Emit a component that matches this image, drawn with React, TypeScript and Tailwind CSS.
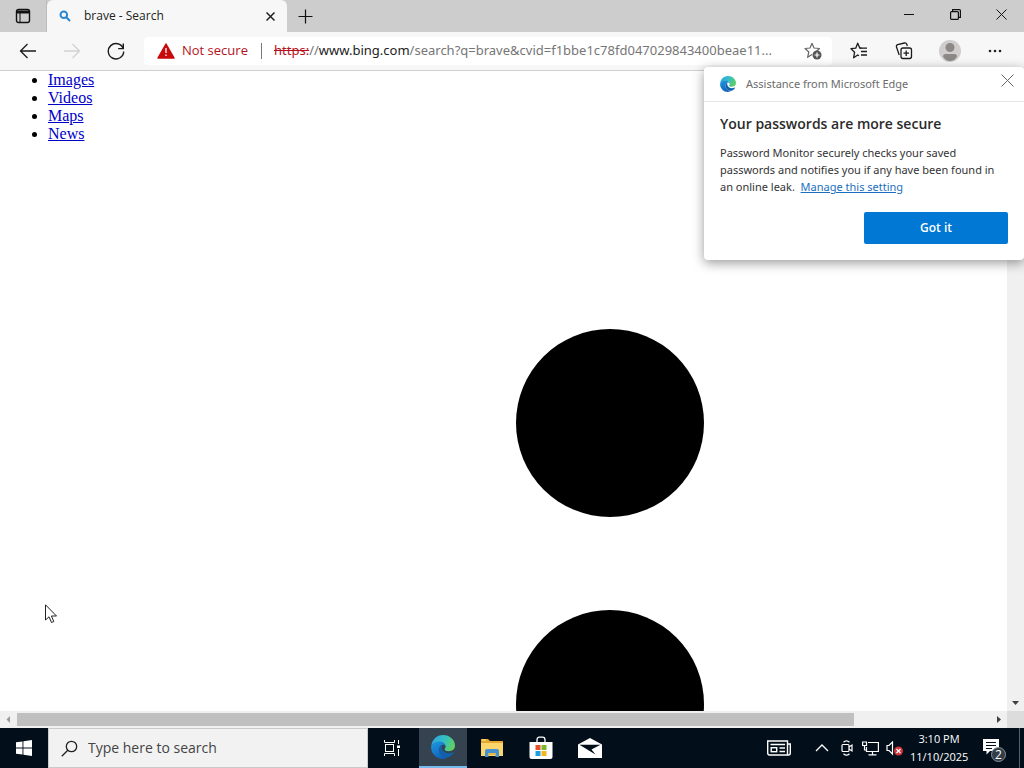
import React from "react";

const links = ["Images", "Videos", "Maps", "News"];

const EdgeLogo: React.FC<{ className: string; id: string }> = ({ className, id }) => (
  <svg viewBox="0 0 24 24" className={className} aria-hidden="true">
    <defs>
      <linearGradient id={`${id}-top`} x1="0" y1="0.3" x2="1" y2="0.6">
        <stop offset="0" stopColor="#2fa4e0" />
        <stop offset="0.5" stopColor="#33bfc4" />
        <stop offset="1" stopColor="#62d05c" />
      </linearGradient>
      <linearGradient id={`${id}-body`} x1="0" y1="0" x2="0.6" y2="1">
        <stop offset="0" stopColor="#1f9be0" />
        <stop offset="1" stopColor="#0f5fb8" />
      </linearGradient>
    </defs>
    <path d="M0.2 11C1 4.500 6 0 12 0C19 0 24 5 24 10.600C24 14.300 21.200 16.300 18 16.300C15 16.300 13.600 15.300 13.600 14.300C13.600 13.600 14.600 13.200 14.600 11.500C14.600 9.300 12.300 7 8.800 7C4.600 7 1.300 9 0.200 11Z" fill={`url(#${id}-top)`} />
    <path d="M0.100 12C0.600 8.500 4.500 6.400 8.500 6.600C11.500 6.700 14.500 8.700 14.600 11.500C13.800 9.900 12.300 9.500 11.200 9.900C9 10.800 8 13 8.200 15.200C8.600 19.300 12.500 22.500 17 22.300C15.500 23.400 13.800 24 12 24C5.400 24 0 18.700 0.100 12Z" fill={`url(#${id}-body)`} />
    <path d="M8.200 15.200C8 12.800 9.200 10.800 11.200 9.900C10.300 12.300 11 15 13.300 16.800C16 18.800 19.500 18.600 22.200 17.200C22.700 17 23 17.300 22.700 17.800C21.300 20.200 19.200 22.200 17 22.300C12.500 22.500 8.600 19.300 8.200 15.200Z" fill="#1261ad" />
  </svg>
);

const TabStrip: React.FC = () => (
  <header className="flex h-8 shrink-0 bg-[#cdcdcd]">
    <button aria-label="Tab actions" className="flex w-[47px] items-center justify-center border-r border-[#bcbcbc]">
      <svg width="16" height="16" viewBox="0 0 16 16" fill="none" stroke="#111" strokeWidth="1.4">
        <rect x="1.500" y="1.500" width="13" height="13" rx="2" />
        <path d="M1.500 4H14.500" strokeWidth="3" />
        <path d="M5 5V14" strokeWidth="1" />
      </svg>
    </button>
    <div className="flex w-60 items-center rounded-t-md bg-[#f7f7f7] px-3">
      <svg width="12" height="12" viewBox="0 0 12 12" fill="none" stroke="#2b86cf" strokeWidth="2">
        <circle cx="4.800" cy="4.800" r="3.300" />
        <path d="M7.300 7.300L11 11" />
      </svg>
      <span className="ml-[13px] flex-1 text-xs text-[#222]">brave - Search</span>
      <button aria-label="Close tab" className="flex h-4 w-[10px] items-center justify-center">
        <svg width="9" height="9" viewBox="0 0 9 9" stroke="#222" strokeWidth="1.500">
          <path d="M0.500 0.500L8.500 8.500M8.500 0.500L0.500 8.500" />
        </svg>
      </button>
    </div>
    <button aria-label="New tab" className="flex w-9 items-center justify-center">
      <svg width="15" height="15" viewBox="0 0 15 15" stroke="#111" strokeWidth="1.200">
        <path d="M7.500 0.500V14.500M0.500 7.500H14.500" />
      </svg>
    </button>
    <div className="ml-auto flex pb-1">
      <button aria-label="Minimize" className="flex w-[46px] items-center justify-center">
        <svg width="10" height="10" viewBox="0 0 10 10" stroke="#111"><path d="M0 5.500H10" /></svg>
      </button>
      <button aria-label="Restore" className="flex w-[46px] items-center justify-center">
        <svg width="11" height="11" viewBox="0 0 11 11" fill="none" stroke="#111" strokeWidth="1.200">
          <rect x="0.600" y="2.600" width="7.800" height="7.800" rx="1" />
          <path d="M2.600 2.500V0.600H9.400Q10.400 0.600 10.400 1.600V8.400H8.500" />
        </svg>
      </button>
      <button aria-label="Close" className="flex w-[46px] items-center justify-center">
        <svg width="11" height="11" viewBox="0 0 11 11" stroke="#111">
          <path d="M0.500 0.500L10.500 10.500M10.500 0.500L0.500 10.500" />
        </svg>
      </button>
    </div>
  </header>
);

const Toolbar: React.FC = () => (
  <nav className="flex h-[38px] shrink-0 items-center bg-[#f7f7f7] pl-[6px]">
    <button aria-label="Back" className="flex w-11 justify-center">
      <svg width="18" height="16" viewBox="0 0 18 16" fill="none" stroke="#1b1b1b" strokeWidth="1.300">
        <path d="M17 8H1.500M8.500 1L1.500 8L8.500 15" />
      </svg>
    </button>
    <button aria-label="Forward" disabled className="flex w-11 justify-center">
      <svg width="18" height="16" viewBox="0 0 18 16" fill="none" stroke="#d2d2d2" strokeWidth="1.300">
        <path d="M1 8H16.500M9.500 1L16.500 8L9.500 15" />
      </svg>
    </button>
    <button aria-label="Refresh" className="flex w-11 justify-center">
      <svg width="18" height="18" viewBox="0 0 18 18" fill="none" stroke="#1b1b1b" strokeWidth="1.400">
        <path d="M16.200 6.500A7.700 7.700 0 1 0 16.700 9.500" />
        <path d="M16.300 1.500V6.600H11.200" />
      </svg>
    </button>
    <div className="ml-[6px] flex h-7 min-w-0 flex-1 items-center rounded-sm bg-white pr-[10px] pl-[13px]">
      <svg width="18" height="16" viewBox="0 0 18 16" className="shrink-0">
        <path d="M9 1L17 15H1Z" fill="#c80a0a" stroke="#c80a0a" strokeWidth="1.500" strokeLinejoin="round" />
        <path d="M9 5V10M9 11.500V13" stroke="#fff" strokeWidth="1.300" />
      </svg>
      <span className="ml-[7px] w-[67px] text-[13px] whitespace-nowrap text-[#b5121b]">Not secure</span>
      <span className="mx-3 h-4 w-px bg-[#777]" />
      <p className="min-w-0 flex-1 font-['Noto_Sans',sans-serif] text-[13px] whitespace-nowrap text-[#767676]">
        <s className="text-[#b5121b]">https:</s>//<span className="text-[#222]">www.bing.com</span>
        /search?q=brave&amp;cvid=f1bbe1c78fd047029843400beae11...
      </p>
      <button aria-label="Add to favorites" className="ml-4 shrink-0">
        <svg width="18" height="18" viewBox="0 0 18 18" fill="none" stroke="#666" strokeWidth="1.200">
          <path d="M8 1.200L10 6L15.500 6.500L12.500 9.200M8 1.200L6 6L1 6.500L4.800 10L3.600 15.300L8 12.600" strokeLinejoin="round" />
          <circle cx="13" cy="13" r="4.500" fill="#555" stroke="none" />
          <path d="M13 10.500V15.500M10.500 13H15.500" stroke="#fff" />
        </svg>
      </button>
    </div>
    <div className="flex w-48 items-center justify-around pr-[6px] pl-1">
      <button aria-label="Favorites" className="flex w-11 justify-center">
        <svg width="18" height="18" viewBox="0 0 18 18" fill="none" stroke="#1b1b1b" strokeWidth="1.300" strokeLinejoin="round">
          <path d="M11.500 6.200H9.900L7.700 1.200L5.700 6.200L1 6.700L4.600 10.200L3.600 15.800L7.700 13L9 13.800" />
          <path d="M9.900 6.200H17M11 9.500H17M11 13H17" />
        </svg>
      </button>
      <button aria-label="Collections" className="flex w-11 justify-center">
        <svg width="18" height="18" viewBox="0 0 18 18" fill="none" stroke="#1b1b1b" strokeWidth="1.300">
          <rect x="6" y="6" width="10.500" height="10.500" rx="2" />
          <path d="M11.200 8.500V14M8.500 11.200H14" />
          <path d="M4.200 13L1.500 5Q1 3.300 2.600 2.700L9.500 1Q11.200 0.700 11.800 2.300L12.300 4" />
        </svg>
      </button>
      <button aria-label="Profile" className="flex w-11 justify-center">
        <svg width="22" height="22" viewBox="0 0 22 22">
          <circle cx="11" cy="11" r="11" fill="#d0cecd" />
          <circle cx="11" cy="7.500" r="4.500" fill="#8b8886" />
          <path d="M4 16.500Q4 14 6.500 14H15.500Q18 14 18 16.500Q15.500 21 11 21Q6.500 21 4 16.500Z" fill="#8b8886" />
        </svg>
      </button>
      <button aria-label="Settings and more" className="flex w-11 justify-center">
        <svg width="14" height="4" viewBox="0 0 14 4" fill="#222">
          <circle cx="2" cy="2" r="1.300" />
          <circle cx="7" cy="2" r="1.300" />
          <circle cx="12" cy="2" r="1.300" />
        </svg>
      </button>
    </div>
  </nav>
);

const PasswordPrompt: React.FC = () => (
  <section className="absolute top-[67px] right-0 w-80 rounded-sm bg-white pb-4 shadow-[0_3px_12px_rgba(0,0,0,0.4)]">
    <div className="flex h-[35px] items-center border-b border-[#e5e5e5] pr-[10px] pl-4">
      <EdgeLogo id="edge-prompt" className="size-4" />
      <span className="ml-[10px] flex-1 font-['Noto_Sans',sans-serif] text-[11px] text-[#6b6b6b]">Assistance from Microsoft Edge</span>
      <button aria-label="Dismiss" className="mb-2">
        <svg width="13" height="13" viewBox="0 0 13 13" stroke="#666">
          <path d="M0.500 0.500L12.500 12.500M12.500 0.500L0.500 12.500" />
        </svg>
      </button>
    </div>
    <div className="px-4 pt-3">
      <h2 className="text-sm leading-5 font-semibold text-[#2b2b2b]">Your passwords are more secure</h2>
      <p className="mt-[10px] font-['Noto_Sans',sans-serif] text-[11px] leading-[17px] whitespace-nowrap text-[#333]">
        Password Monitor securely checks your saved
        <br />
        passwords and notifies you if any have been found in
        <br />
        an online leak.&nbsp;{" "}
        <a href="#settings" className="text-[#1a6fc0] underline">Manage this setting</a>
      </p>
      <button className="mt-[17px] ml-auto block h-8 w-36 rounded-xs bg-[#0078d4] text-xs font-semibold text-white">Got it</button>
    </div>
  </section>
);

const Page: React.FC = () => (
  <div className="flex min-h-0 flex-1 border-t border-[#cfcfcf]">
    <div className="flex min-w-0 flex-1 flex-col">
      <main className="min-h-0 flex-1 overflow-hidden bg-white font-['Liberation_Serif',serif]">
        <ul className="list-disc pl-12 text-base leading-[18px] text-black">
          {links.map((name) => (
            <li key={name}>
              <a href={`#${name}`} className="text-[#0000c8] underline">{name}</a>
            </li>
          ))}
        </ul>
        <svg width="188" height="469" viewBox="0 0 188 469" className="mt-[186px] ml-[516px]">
          <circle cx="94" cy="94" r="94" />
          <circle cx="94" cy="375" r="94" />
        </svg>
      </main>
      <div className="flex h-[17px] shrink-0 items-center bg-[#f0f0f0]">
        <svg width="17" height="17" viewBox="0 0 17 17" fill="#999"><path d="M10 5V12L6.500 8.500Z" /></svg>
        <div className="flex h-[13px] flex-1">
          <div className="w-[86%] bg-[#c0c0c0]" />
        </div>
        <svg width="17" height="17" viewBox="0 0 17 17" fill="#404040"><path d="M7 5V12L11 8.500Z" /></svg>
      </div>
    </div>
    <div className="flex w-[17px] shrink-0 flex-col justify-end bg-[#f0f0f0]">
      <svg width="17" height="17" viewBox="0 0 17 17" fill="#404040"><path d="M5 7H12L8.500 11Z" /></svg>
      <div className="h-[17px] bg-[#dcdcdc]" />
    </div>
  </div>
);

const Taskbar: React.FC = () => (
  <footer className="flex h-10 shrink-0 bg-[#020f1b] text-white">
    <button aria-label="Start" className="flex w-12 items-center justify-center">
      <svg width="16" height="16" viewBox="0 0 16 16" fill="#fff">
        <path d="M0 2.300L6.500 1.400V7.500H0ZM7.400 1.300L16 0V7.500H7.400ZM0 8.400H6.500V14.600L0 13.700ZM7.400 8.400H16V16L7.400 14.700Z" />
      </svg>
    </button>
    <label className="flex w-80 items-center border border-[#c9c9c9] bg-[#f2f2f2] pl-3">
      <svg width="17" height="17" viewBox="0 0 17 17" fill="none" stroke="#222" strokeWidth="1.300">
        <circle cx="10.500" cy="6.500" r="5.200" />
        <path d="M6.800 10.200L0.800 16.200" />
      </svg>
      <input
        aria-label="Search Windows"
        placeholder="Type here to search"
        className="ml-[10px] min-w-0 flex-1 bg-transparent text-sm text-[#444] outline-none placeholder:text-[#444]"
      />
    </label>
    <button aria-label="Task View" className="flex w-[51px] items-center justify-center pr-1">
      <svg width="18" height="16" viewBox="0 0 18 16" fill="none" stroke="#fff">
        <rect x="2.500" y="4.500" width="8" height="7" />
        <path d="M1.500 0V2.500H11.500V0M1.500 16V13.500H11.500V16M15.500 0V4M15.500 9V16" />
        <path d="M14 5.500H17V8H14Z" fill="#fff" stroke="none" />
      </svg>
    </button>
    <button aria-label="Microsoft Edge" className="flex w-12 items-center justify-center border-b-2 border-[#76b9ed] bg-[#34434f]">
      <EdgeLogo id="edge-task" className="size-6" />
    </button>
    <button aria-label="File Explorer" className="flex w-[50px] items-center justify-center">
      <svg width="22" height="20" viewBox="0 0 22 20">
        <path d="M0 1H7L9 3H22V18H0Z" fill="#e6a92e" />
        <path d="M1 1H5V3H1Z" fill="#f6cf62" />
        <path d="M0 5H22V18H0Z" fill="#fbd66c" />
        <path d="M4 19V13Q4 11 6 11H16Q18 11 18 13V19H14.500V15H7.500V19Z" fill="#4691cf" />
        <path d="M7.500 15H14.500V17H7.500Z" fill="#e9b541" />
      </svg>
    </button>
    <button aria-label="Microsoft Store" className="flex w-12 items-center justify-center">
      <svg width="24" height="24" viewBox="0 0 24 24">
        <path d="M8 7V4Q8 1.200 10.500 1.200H13.500Q16 1.200 16 4V7" fill="none" stroke="#fff" strokeWidth="1.300" />
        <path d="M0.500 6H23.500V21Q23.500 23 21.500 23H2.500Q0.500 23 0.500 21Z" fill="#fff" />
        <path d="M6.500 9H11.500V14H6.500Z" fill="#e8502a" />
        <path d="M12.500 9H17.500V14H12.500Z" fill="#7cb82f" />
        <path d="M6.500 15H11.500V20H6.500Z" fill="#1f9fdf" />
        <path d="M12.500 15H17.500V20H12.500Z" fill="#f6b51e" />
      </svg>
    </button>
    <button aria-label="Mail" className="flex w-[50px] items-center justify-center">
      <svg width="24" height="20" viewBox="0 0 24 20">
        <path d="M0 6.500L12 0L24 6.500V20H0Z" fill="#fff" />
        <path d="M1.500 6.800H22.500L13.500 11.500L17.500 16.500L10 12Z" fill="#020f1b" />
      </svg>
    </button>
    <div className="ml-auto flex items-center">
      <button aria-label="News and interests" className="mr-6">
        <svg width="24" height="16" viewBox="0 0 24 16" fill="none" stroke="#fff" strokeWidth="1.400">
          <path d="M20.500 15H2.500Q0.700 15 0.700 13V1H20.500ZM20.500 4H23.300V13Q23.300 15 21.500 15H20" />
          <path d="M3.500 4.500H18M12.500 8H18M12.500 11.500H18" />
          <rect x="4.200" y="7.700" width="5.500" height="4" />
        </svg>
      </button>
      <button aria-label="Show hidden icons" className="mr-3">
        <svg width="14" height="8" viewBox="0 0 14 8" fill="none" stroke="#fff" strokeWidth="1.300"><path d="M1 7L7 1L13 7" /></svg>
      </button>
      <button aria-label="Meet Now" className="mr-[9px]">
        <svg width="12" height="16" viewBox="0 0 12 16" fill="none" stroke="#fff" strokeWidth="1.200">
          <rect x="1" y="4.500" width="7" height="7" rx="1" />
          <path d="M8 7L11 5V11L8 9M2.500 2.200Q5.500 -0.500 8.500 2.200M2.500 13.800Q5.500 16.500 8.500 13.800" />
        </svg>
      </button>
      <button aria-label="Network" className="mr-[7px]">
        <svg width="17" height="15" viewBox="0 0 17 15" fill="none" stroke="#fff" strokeWidth="1.200">
          <path d="M6 1.500H16.400V10.500H4.500V6M10.500 10.500V13.500M6.500 13.800H14.500" />
          <path d="M0.600 1H4.500V4.500H0.600ZM2.500 4.500V9H4.500" />
        </svg>
      </button>
      <button aria-label="Volume muted" className="mr-[7px]">
        <svg width="17" height="15" viewBox="0 0 17 15" fill="none" stroke="#fff" strokeWidth="1.200">
          <path d="M1 4.500H3L6.500 1V13L3 9.500H1Z" />
          <circle cx="12.500" cy="10" r="4.500" fill="#d13438" stroke="none" />
          <path d="M10.500 8L14.500 12M14.500 8L10.500 12" />
        </svg>
      </button>
      <div className="w-[58px] text-center text-[11px] leading-[18px] whitespace-nowrap">
        <p>3:10 PM</p>
        <p>11/10/2025</p>
      </div>
      <button aria-label="2 notifications" className="mt-1 mr-3 ml-[15px]">
        <svg width="24" height="24" viewBox="0 0 24 24">
          <path d="M0 1H16V13H7L3.500 16.500V13H0Z" fill="#fff" />
          <path d="M3 4.500H13M3 7.500H13M3 10.500H9" stroke="#020f1b" />
          <circle cx="15.500" cy="16.500" r="7" fill="#333d46" stroke="#88919a" />
          <text x="15.500" y="21" textAnchor="middle" fontSize="12" fill="#fff">2</text>
        </svg>
      </button>
      <span className="h-10 w-px bg-[#566069]" />
      <span className="w-1" />
    </div>
  </footer>
);

export default function App() {
  return (
    <div className="relative flex h-screen flex-col overflow-hidden bg-[#f0f0f0] font-['Open_Sans',sans-serif]">
      <TabStrip />
      <Toolbar />
      <Page />
      <Taskbar />
      <PasswordPrompt />
      <svg width="13" height="20" viewBox="0 0 13 20" className="absolute top-[604px] left-[45px]">
        <path d="M0.500 0.800V16L4 12.800L6.500 18.500L8.800 17.500L6.400 12H11.500Z" fill="#fff" stroke="#222" />
      </svg>
    </div>
  );
}
